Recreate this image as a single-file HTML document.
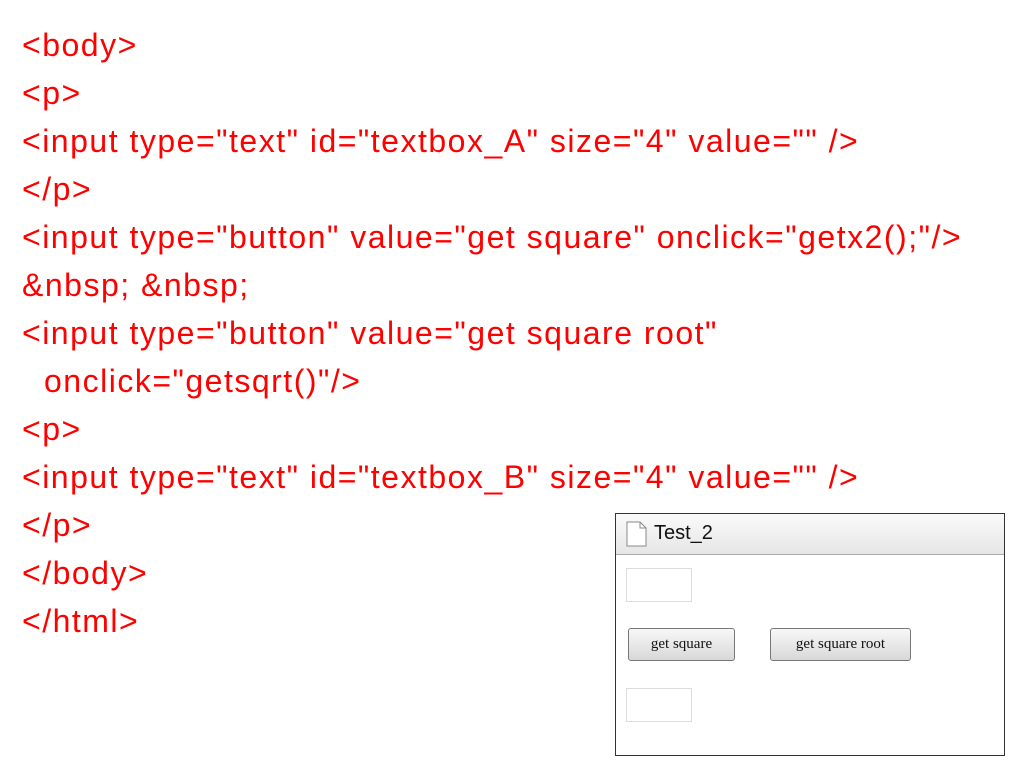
<!DOCTYPE html>
<html><head><meta charset="utf-8"><style>
body{margin:0;width:1024px;height:768px;background:#fff;position:relative;overflow:hidden;font-family:"Liberation Sans",sans-serif}
.l{position:absolute;left:22px;color:#f00;font-size:32px;letter-spacing:1.5px;line-height:34px;white-space:pre}
.win{position:absolute;left:615px;top:513px;width:388px;height:241px;border:1px solid #333;background:#fff}
.tb{position:absolute;left:0;top:0;right:0;height:40px;background:linear-gradient(#fafafa,#e6e6e6);border-bottom:1px solid #aaa}
.tb span{position:absolute;left:38px;top:8px;font-size:20px;color:#111}
.in{position:absolute;width:64px;height:32px;border:1px solid #ddd;background:#fff}
.bt{position:absolute;height:31px;border:1px solid #777;border-radius:3px;background:linear-gradient(#f8f8f8,#d8d8d8);font-family:"Liberation Serif",serif;font-size:15px;text-align:center;line-height:30px;color:#111}
</style></head><body>
<div class="l" style="top:28px">&lt;body&gt;</div>
<div class="l" style="top:76px">&lt;p&gt;</div>
<div class="l" style="top:124px">&lt;input type="text" id="textbox_A" size="4" value="" /&gt;</div>
<div class="l" style="top:172px">&lt;/p&gt;</div>
<div class="l" style="top:220px">&lt;input type="button" value="get square" onclick="getx2();"/&gt;</div>
<div class="l" style="top:268px">&amp;nbsp; &amp;nbsp;</div>
<div class="l" style="top:316px">&lt;input type="button" value="get square root"</div>
<div class="l" style="top:364px;left:44px">onclick="getsqrt()"/&gt;</div>
<div class="l" style="top:412px">&lt;p&gt;</div>
<div class="l" style="top:460px">&lt;input type="text" id="textbox_B" size="4" value="" /&gt;</div>
<div class="l" style="top:508px">&lt;/p&gt;</div>
<div class="l" style="top:556px">&lt;/body&gt;</div>
<div class="l" style="top:604px">&lt;/html&gt;</div>
<div class="win">
 <div class="tb"><svg style="position:absolute;left:10px;top:7px" width="22" height="26"><path d="M1 1H14L20 7V25H1Z" fill="#fff" stroke="#888"/><path d="M14 1V7H20" fill="none" stroke="#888"/></svg><span>Test_2</span></div>
 <div class="in" style="left:10px;top:54px"></div>
 <div class="bt" style="left:12px;top:114px;width:105px">get square</div>
 <div class="bt" style="left:154px;top:114px;width:139px">get square root</div>
 <div class="in" style="left:10px;top:174px"></div>
</div>
</body></html>
